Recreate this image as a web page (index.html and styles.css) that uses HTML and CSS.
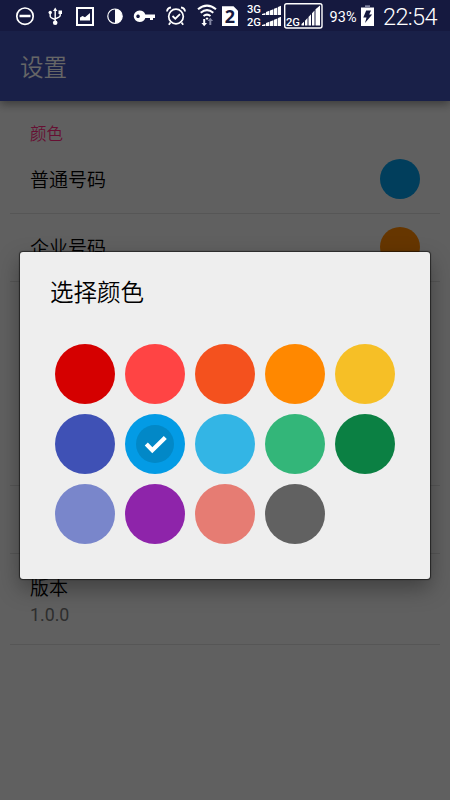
FILE: index.html
```html
<!DOCTYPE html>
<html lang="zh-CN">
<head>
<meta charset="utf-8">
<title>设置</title>
<link rel="stylesheet" href="styles.css">
</head>
<body>
<div class="screen">
  <header class="status">
    <svg class="status-icons" width="450" height="31" viewBox="0 0 450 31" fill="none" stroke="#fff">
      <!-- do not disturb -->
      <circle cx="25" cy="16.2" r="8.2" stroke-width="1.7"/>
      <path d="M19.500 16h11" stroke-width="2.500"/>
      <!-- usb -->
      <path d="M55.200 10v12M50.200 13v3.200q0 1.500 5 3.300M60.200 12v3.500q0 1.500-5 3.300" stroke-width="1.400"/>
      <path d="M55.200 7.500l2.200 3.500h-4.400zM58.500 10.500h3.500v3.500h-3.500z" fill="#fff" stroke="none"/>
      <circle cx="50.200" cy="12.500" r="1.700" fill="#fff" stroke="none"/>
      <circle cx="55.200" cy="22.700" r="2.300" fill="#fff" stroke="none"/>
      <!-- picture -->
      <rect x="77" y="8" width="16" height="17" stroke-width="2"/>
      <path d="M80 20.500v-3l2.500-1.500 2.500 1.200 5-4.200v7.500z" fill="#fff" stroke="none"/>
      <!-- contrast -->
      <circle cx="115" cy="16.200" r="7.200" stroke-width="1.200"/>
      <path d="M115 9a7.200 7.200 0 0 1 0 14.400z" fill="#fff" stroke="none"/>
      <!-- key -->
      <path fill-rule="evenodd" d="M139.500 10.500c3 0 5 1.600 5.800 4H155v3.500h-2v2h-3v-2h-4.700c-.8 2.500-2.800 4-5.800 4a5.700 5.700 0 0 1 0-11.500zM138 14.500a1.800 1.800 0 1 0 .1 0z" fill="#fff" stroke="none"/>
      <!-- alarm -->
      <circle cx="176" cy="16.500" r="7.300" stroke-width="1.700"/>
      <path d="M167 11.500q.2-3.500 4-4M185 11.500q-.2-3.500-4-4M170.500 22.500l-1.700 2.300M181.500 22.500l1.700 2.300M172.500 16l2.800 2.700 4.700-4.500" stroke-width="1.800"/>
      <!-- wifi -->
      <path d="M198 9.300q9-7.300 18 0M200.700 12.700q6.300-5 12.600 0M203.500 16q3.500-2.600 7 0" stroke-width="2.100"/>
      <path d="M207 17.200l1.500 1.300-1.500 1.500-1.500-1.500z" fill="#fff" stroke="none"/>
      <path d="M203.200 19h2v4h1.800l-2.800 3.300-2.800-3.300h1.800z" fill="#fff" stroke="none"/>
      <path d="M209.300 25v-4h-1.800l2.800-3.300 2.800 3.300h-1.800v4z" fill="#8286a2" stroke="none"/>
      <!-- sim -->
      <path d="M222 6.200h11.500l4.500 4.500V26h-16z" fill="#fff" stroke="none"/>
      <!-- dual signal -->
      <g fill="#fff" stroke="none">
        <path d="M262 15v-1l3.400-1v2zM266 15v-3l3.400-1.200V15zM270 15v-4.500l3.400-1.200V15zM274 15V8.800l3.400-1.200V15zM278 15V7l3-1.300V15z"/>
        <path d="M262 26v-1l3.400-1v2zM266 26v-3l3.400-1.200V26zM270 26v-4.500l3.400-1.200V26zM274 26v-6.200l3.400-1.200V26zM278 26v-8l3-1.300V26z"/>
        <path d="M301.500 25.500v-1.500l2.500-2.200v3.700zM305 25.500v-4.800l2.500-2.700v7.500zM308.500 25.500v-8.500l2.500-2.800v11.300zM312 25.500v-12.300l2.500-2.700v15zM315.500 25.500V9.300L320 5.500v20z"/>
      </g>
      <rect x="284.700" y="3.700" width="37.300" height="24.300" rx="2" stroke-width="1.400"/>
      <!-- battery -->
      <path d="M361 7.500h13V26h-13z" fill="#fff" stroke="none"/>
      <path d="M365 5.300h5v2.200h-5z" fill="#8286a2" stroke="none"/>
      <path d="M366.200 10.500h4.800l-1.800 4h3l-7.200 8.500 1.500-5.500h-3.200z" fill="#15193f" stroke="none"/>
      <g class="status-text">
        <text x="224.800" y="22.800" class="sim">2</text>
        <text x="247" y="13.200" class="net" textLength="14" lengthAdjust="spacingAndGlyphs">3G</text>
        <text x="247" y="26" class="net" textLength="14" lengthAdjust="spacingAndGlyphs">2G</text>
        <text x="286" y="26" class="net" textLength="14" lengthAdjust="spacingAndGlyphs">2G</text>
        <text x="329.500" y="22" class="percent" textLength="27">93%</text>
        <text x="383" y="24.700" class="clock" textLength="54.500">22:54</text>
      </g>
    </svg>
  </header>
  <div class="appbar">设置</div>
  <main class="settings">
    <h2 class="section">颜色</h2>
    <div class="row"><span>普通号码</span><i class="dot blue"></i></div>
    <div class="row"><span>企业号码</span><i class="dot orange"></i></div>
    <div class="row group-gap"></div>
    <div class="row"></div>
    <div class="row version"><span>版本</span><small>1.0.0</small></div>
  </main>
  <div class="scrim">
    <section class="dialog">
      <h1>选择颜色</h1>
      <div class="palette">
        <i class="c1"></i><i class="c2"></i><i class="c3"></i><i class="c4"></i><i class="c5"></i>
        <i class="c6"></i>
        <i class="c7"><svg width="38" height="38" viewBox="0 0 38 38"><circle cx="19" cy="19" r="19" fill="#0288c7"/><path d="M10.300 19l6 6.200L29.300 12.500" fill="none" stroke="#fff" stroke-width="4.300"/></svg></i>
        <i class="c8"></i><i class="c9"></i><i class="c10"></i>
        <i class="c11"></i><i class="c12"></i><i class="c13"></i><i class="c14"></i>
      </div>
    </section>
  </div>
</div>
</body>
</html>
```

FILE: styles.css
```css
* { box-sizing: border-box; }
body { margin: 0; }
.screen {
  position: relative;
  width: 450px;
  height: 800px;
  overflow: hidden;
  display: flex;
  flex-direction: column;
  background: #f0f0f0;
  color: #000;
  font-family: Roboto, "Noto Sans CJK SC", sans-serif;
}
.status {
  position: relative;
  z-index: 3;
  height: 31px;
  flex: none;
  background: #15193f;
}
.status-icons { display: block; }
.status-text { fill: #fff; stroke: none; }
.sim { font: 700 18px "Open Sans", sans-serif; fill: #15193f; }
.net { font: 500 10.5px Roboto, sans-serif; }
.percent { font: 400 14.5px Roboto, sans-serif; }
.clock { font: 350 23.5px Roboto, sans-serif; }
.appbar {
  position: relative;
  z-index: 1;
  flex: none;
  height: 70px;
  padding: 0 20px 1px;
  display: flex;
  align-items: center;
  background: #3f51b5;
  color: #fff;
  font-size: 23.5px;
  font-weight: 350;
  box-shadow: 0 3px 9px rgba(0, 0, 0, .4);
}
.settings { padding: 0 10px; }
.section {
  margin: 0;
  height: 45px;
  padding: 22px 20px 0;
  font-size: 16.5px;
  line-height: 24px;
  font-weight: 350;
  color: #ff2a80;
}
.row {
  height: 68px;
  padding: 0 20px 2px;
  display: flex;
  align-items: center;
  justify-content: space-between;
  border-bottom: 1px solid #d8d8d8;
  font-size: 19px;
  font-weight: 350;
}
.dot { width: 40px; height: 40px; border-radius: 50%; }
.blue { background: #039be5; }
.orange { background: #ff8800; }
.group-gap { height: 204px; }
.version {
  height: 91px;
  padding: 2px 20px 0;
  flex-direction: column;
  align-items: flex-start;
  justify-content: center;
}
.version span { line-height: 28px; }
.version small { font-size: 17.8px; line-height: 23px; font-weight: 400; color: #747474; }
.scrim {
  position: absolute;
  inset: 31px 0 0;
  z-index: 2;
  display: flex;
  justify-content: center;
  align-items: flex-start;
  padding-top: 221px;
  background: rgba(0, 0, 0, .6);
}
.dialog {
  width: 410px;
  height: 327px;
  padding: 23px 30px 0;
  border-radius: 3px;
  background: #eee;
  box-shadow: 0 0 1px 1px rgba(0, 0, 0, .55), 0 9px 22px rgba(0, 0, 0, .35);
}
.dialog h1 {
  margin: 0;
  font-size: 23.5px;
  line-height: 36px;
  font-weight: 350;
}
.palette {
  display: grid;
  grid-template-columns: repeat(5, 60px);
  gap: 10px;
  margin: 33px 0 0 5px;
}
.palette i {
  width: 60px;
  height: 60px;
  border-radius: 50%;
  display: flex;
  align-items: center;
  justify-content: center;
}
.c1 { background: #d50000; }
.c2 { background: #ff4444; }
.c3 { background: #f4511e; }
.c4 { background: #ff8800; }
.c5 { background: #f6bf26; }
.c6 { background: #3f51b5; }
.c7 { background: #039be5; }
.c8 { background: #33b5e5; }
.c9 { background: #33b679; }
.c10 { background: #0b8043; }
.c11 { background: #7986cb; }
.c12 { background: #8e24aa; }
.c13 { background: #e67c73; }
.c14 { background: #616161; }
```
